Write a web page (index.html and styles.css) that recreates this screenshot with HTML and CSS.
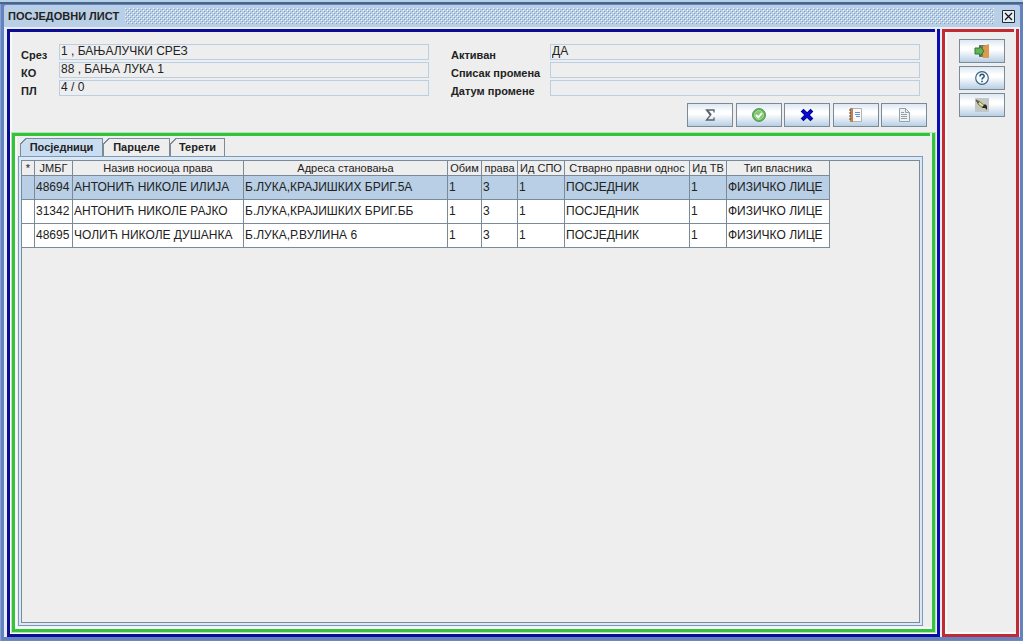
FILE: index.html
```html
<!DOCTYPE html>
<html lang="sr">
<head>
<meta charset="utf-8">
<title>ПОСЈЕДОВНИ ЛИСТ</title>
<link rel="stylesheet" href="styles.css">
</head>
<body>
<div class="window">
  <header class="titlebar">
    <h1 class="title">ПОСЈЕДОВНИ ЛИСТ</h1>
    <div class="bumps"></div>
    <button class="close" type="button" aria-label="Затвори">
      <svg width="13" height="13" viewBox="0 0 13 13"><path d="M.5.5h12v12H.5z" fill="#e4edf6" stroke="#222b3c"/><path d="M3 3l7 7M10 3l-7 7" stroke="#111" stroke-width="1.2"/></svg>
    </button>
  </header>
  <div class="content">
    <main class="main frame">
      <form class="details">
        <div class="fields">
          <label for="srez">Срез</label><input id="srez" readonly value="1 , БАЊАЛУЧКИ СРЕЗ">
          <label for="ko">КО</label><input id="ko" readonly value="88 , БАЊА ЛУКА 1">
          <label for="pl">ПЛ</label><input id="pl" readonly value="4 / 0">
        </div>
        <div class="fields fields-wide">
          <label for="active">Активан</label><input id="active" readonly value="ДА">
          <label for="changes">Списак промена</label><input id="changes" readonly>
          <label for="date">Датум промене</label><input id="date" readonly>
        </div>
      </form>
      <div class="toolbar">
        <button class="tool" type="button" aria-label="Збир"><svg width="16" height="16" viewBox="0 0 16 16"><path d="M12 5.500V3H4.500l4 5-4 5H12v-2.500" fill="none" stroke="#59616b" stroke-width="1.300"/><path d="M5 3l4 5" stroke="#59616b" stroke-width="2"/></svg></button>
        <button class="tool" type="button" aria-label="Потврди"><svg width="16" height="16" viewBox="0 0 16 16"><circle cx="8" cy="8" r="6.500" fill="#5faf55" stroke="#5a9e5c"/><circle cx="8" cy="8" r="4.500" fill="#7fca70" stroke="#a9dd9b"/><path d="M5 8l2.300 2.300L11 6" fill="none" stroke="#fff" stroke-width="1.900"/></svg></button>
        <button class="tool" type="button" aria-label="Откажи"><svg width="16" height="16" viewBox="0 0 16 16"><path d="M4.500 4.500l7 7M11.500 4.500l-7 7" stroke="#04047e" stroke-width="4" stroke-linecap="square"/><path d="M4 4l8 8M12 4l-8 8" stroke="#0909cf" stroke-width="2.600"/></svg></button>
        <button class="tool" type="button" aria-label="Књига"><svg width="16" height="16" viewBox="0 0 16 16"><path d="M3.500 1.500h10v13h-10z" fill="#fafafa" stroke="#b5b2b0"/><path d="M2 1h3v14H2z" fill="#b98555"/><path d="M1 3h2M1 6h2M1 9h2M1 12h2" stroke="#60452f"/><path d="M7 5.500h5M7 7.500h5M8 9.500h4" stroke="#6a92d2" stroke-width="1.200"/></svg></button>
        <button class="tool" type="button" aria-label="Документ"><svg width="16" height="16" viewBox="0 0 16 16"><path d="M3.500 1.500h6l4 4v9h-10z" fill="#edf1f3" stroke="#96a2aa"/><path d="M9.500 1.500v4h4M5 5.500h3M5 7.500h6M5 9.500h6M5 11.500h6" fill="none" stroke="#96a2aa"/></svg></button>
      </div>
      <section class="records frame">
        <nav class="tabs" role="tablist">
          <button class="tab tab-active" type="button" role="tab" aria-selected="true">Посједници</button>
          <button class="tab" type="button" role="tab" aria-selected="false">Парцеле</button>
          <button class="tab tab-short" type="button" role="tab" aria-selected="false">Терети</button>
        </nav>
        <div class="pane">
          <div class="scroll">
            <table class="grid">
              <colgroup><col class="c-mark"><col class="c-id"><col class="c-name"><col class="c-address"><col class="c-scope"><col class="c-right"><col class="c-spo"><col class="c-relation"><col class="c-tv"><col class="c-type"></colgroup>
              <thead><tr><th>*</th><th>ЈМБГ</th><th>Назив носиоца права</th><th>Адреса становања</th><th>Обим</th><th>права</th><th>Ид СПО</th><th>Стварно правни однос</th><th>Ид ТВ</th><th>Тип власника</th></tr></thead>
              <tbody>
                <tr class="selected"><td></td><td>48694</td><td>АНТОНИЋ НИКОЛЕ ИЛИЈА</td><td>Б.ЛУКА,КРАЈИШКИХ БРИГ.5А</td><td>1</td><td>3</td><td>1</td><td>ПОСЈЕДНИК</td><td>1</td><td>ФИЗИЧКО ЛИЦЕ</td></tr>
                <tr><td></td><td>31342</td><td>АНТОНИЋ НИКОЛЕ РАЈКО</td><td>Б.ЛУКА,КРАЈИШКИХ БРИГ.ББ</td><td>1</td><td>3</td><td>1</td><td>ПОСЈЕДНИК</td><td>1</td><td>ФИЗИЧКО ЛИЦЕ</td></tr>
                <tr><td></td><td>48695</td><td>ЧОЛИЋ НИКОЛЕ ДУШАНКА</td><td>Б.ЛУКА,Р.ВУЛИНА 6</td><td>1</td><td>3</td><td>1</td><td>ПОСЈЕДНИК</td><td>1</td><td>ФИЗИЧКО ЛИЦЕ</td></tr>
              </tbody>
            </table>
          </div>
        </div>
      </section>
    </main>
    <aside class="side frame">
      <button class="tool" type="button" aria-label="Излаз"><svg width="16" height="16" viewBox="0 0 16 16"><path d="M5 2h9v12H5z" fill="#7d7468"/><path d="M9 3l6-2v14H9z" fill="#dc9a4c"/><path d="M1 5h5V3l4 5-4 5v-2H1z" fill="#62b459" stroke="#2f7836"/></svg></button>
      <button class="tool" type="button" aria-label="Помоћ"><svg width="16" height="16" viewBox="0 0 16 16"><circle cx="8" cy="8" r="6.300" fill="#f5fafd" stroke="#3c6683" stroke-width="1.200"/><path d="M6 6.500c0-3 4.300-2.700 4.200-.3C10.100 7.700 8 7.700 8 9.500" fill="none" stroke="#285172" stroke-width="1.500"/><path d="M7.200 10.800h1.600v1.500H7.200z" fill="#285172"/></svg></button>
      <button class="tool" type="button" aria-label="Алат"><svg width="16" height="16" viewBox="0 0 16 16"><path d="M1 1h14v14H1z" fill="#c3c7c5"/><path d="M3 4h2l6 5-2 2-5-4z" fill="#e9e08c" stroke="#77743f"/><path d="M8 10l3-3 2 2v4l-2-2H9z" fill="#272923"/><path d="M2 3l3 3" stroke="#55564a" stroke-width="1.500"/></svg></button>
    </aside>
  </div>
</div>
</body>
</html>
```
FILE: styles.css
```css
* { box-sizing: border-box; }
html, body { height: 100%; margin: 0; }
body { font: 11px "Liberation Sans", Arial, sans-serif; color: #222; background: #b8d8ee; }
button, input { font: inherit; color: inherit; margin: 0; }
svg { display: block; }

.window {
  display: flex; flex-direction: column; height: 100%;
  border-top: 2px solid #b3d2e8;
  background: #6382bf; padding: 3px 3px 4px 4px;
  box-shadow: inset 0 2px #4b6488, inset 1px 0 #88a2cf, inset 0 -1px #7189b5;
}
.titlebar {
  display: flex; align-items: center; flex: none; height: 22px; gap: 6px;
  padding: 0 5px 0 4px; background: #b8cfe5; border-radius: 2px 2px 0 0;
}
.title { margin: 0; font-size: 11px; line-height: 22px; font-weight: bold; white-space: nowrap; }
.bumps {
  flex: 1; height: 16px; margin-right: 2px;
  background-image:
    conic-gradient(from 0deg at 1px 1px, transparent 75%, #f2f7fb 0),
    conic-gradient(from 0deg at 1px 1px, transparent 75%, #f2f7fb 0),
    conic-gradient(from 0deg at 1px 1px, transparent 75%, #7f9dc4 0),
    conic-gradient(from 0deg at 1px 1px, transparent 75%, #7f9dc4 0);
  background-size: 4px 4px;
  background-position: 0 0, 2px 2px, 1px 1px, 3px 3px;
}
.close { border: 0; padding: 0; background: none; }

.content {
  display: flex; flex: 1; min-height: 0; gap: 2px; padding: 2px 1px 0 3px;
  background: #e5edf5;
}
/* Bevelled frame with a pale notch where the top bar meets the right bar. */
.frame {
  position: relative; border: 3px solid;
  box-shadow: inset 2px 0 #fafafa, inset 0 -2px #fafafa;
}
.frame::after {
  content: ""; position: absolute; top: -3px; right: 0;
  width: 2px; height: 3px; background: #e5edf5;
}
.main {
  display: flex; flex-direction: column; flex: 1; min-width: 0;
  border-color: #0c0c94 #0c0cb4 #0c0c94 #0c0c94; background: #eee; padding: 12px 2px 2px;
}
.side {
  display: flex; flex-direction: column; align-items: center; flex: none; gap: 3px;
  width: 77px; padding: 7px 0 0 3px; background: #eee;
  border-color: #c02a30;
}
.details { display: grid; grid-template-columns: 408fr 469fr; gap: 22px; padding: 0 15px 0 9px; }
.fields { display: grid; grid-template-columns: 30px 1fr; gap: 2px 8px; }
.fields-wide { grid-template-columns: 91px 1fr; }
.fields label { font-weight: bold; line-height: 16px; padding-top: 3px; height: 16px; white-space: nowrap; }
.fields input {
  width: 100%; height: 16px; min-width: 0; padding: 0 1px 3px; border: 1px solid #b8cfe5;
  background: #eee; font-size: 12px; line-height: 12px; outline: 0;
}
.toolbar {
  display: flex; justify-content: space-between; align-self: flex-end;
  width: 240px; margin: 7px 8px 6px 0;
}
.tool {
  display: flex; align-items: center; justify-content: center;
  width: 46px; height: 24px; padding: 0; border: 1px solid #7a8a99;
  background: linear-gradient(#dde8f3 0, #fff 35%, #fff 45%, #b8cfe5 100%);
}

.records {
  display: flex; flex-direction: column; flex: 1; min-height: 0;
  border-color: #33c33c; outline: 1px solid #b4e4b4;
  padding: 2px 9px 3px 3px;
}
.tabs { display: flex; align-items: flex-end; padding-left: 2px; }
.tab {
  width: 67px; height: 18px; padding: 0; border: 0;
  background:
    linear-gradient(#7a8a99, #7a8a99) right / 1px 100% no-repeat,
    linear-gradient(#7a8a99, #7a8a99) 6px 0 / 100% 1px no-repeat,
    linear-gradient(#7a8a99, #7a8a99) 0 6px / 1px 100% no-repeat,
    linear-gradient(135deg, #eee 4px, #7a8a99 4px, #7a8a99 5px, #eee 5px);
  font-weight: bold; line-height: 18px;
}
.tab-active {
  width: 83px;
  background:
    linear-gradient(#7a8a99, #7a8a99) right / 1px 100% no-repeat,
    linear-gradient(#7a8a99, #7a8a99) 6px 0 / 100% 1px no-repeat,
    linear-gradient(#7a8a99, #7a8a99) 0 6px / 1px 100% no-repeat,
    linear-gradient(135deg, #eee 4px, #7a8a99 4px, #7a8a99 5px, #c8ddf2 5px);
}
.tab-short { width: 55px; }
.pane { flex: 1; min-height: 0; padding: 3px 2px 2px; border: 1px solid #7a9abf; background: #dce9f2; }
.scroll { height: 100%; overflow: hidden; border: 1px solid #7a8a99; background: #eee; }

/* Outer table rules share the scroll area's own border. */
.grid { table-layout: fixed; border-collapse: collapse; width: 809px; margin: -1px 0 0 -1px; }
.grid th, .grid td { border: 1px solid #7a8a99; overflow: hidden; white-space: nowrap; }
.grid th { height: 15px; padding: 0; font-weight: normal; line-height: 14px; }
.grid td { height: 24px; padding: 0 0 1px 1px; background: #fff; font-size: 12px; line-height: 14px; }
.grid .selected td { background: #b8cfe5; }
.c-mark { width: 13px; }
.c-id { width: 38px; }
.c-name { width: 171px; }
.c-address { width: 204px; }
.c-scope { width: 34px; }
.c-right { width: 36px; }
.c-spo { width: 47px; }
.c-relation { width: 125px; }
.c-tv { width: 37px; }
.c-type { width: 103px; }
```
